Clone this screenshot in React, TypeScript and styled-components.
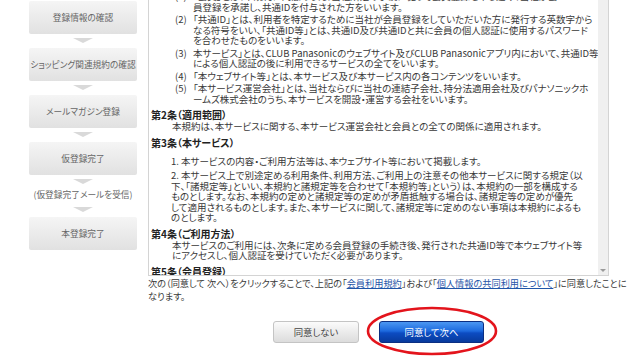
import React, { useLayoutEffect, useRef } from "react";
import styled, { createGlobalStyle } from "styled-components";

const GlobalStyle = createGlobalStyle`
  html, body { margin: 0; padding: 0; background: #ffffff; }
  body {
    font-family: "Noto Sans CJK JP", "Noto Sans", sans-serif;
    font-feature-settings: "palt";
    color: #333333;
    overflow: hidden;
  }
`;

const Page = styled.div`
  display: flex;
  align-items: flex-start;
  width: 640px;
  height: 360px;
  overflow: hidden;
`;

const Sidebar = styled.nav`
  flex: none;
  width: 148px;
  box-sizing: border-box;
  padding: 1px 0 0 29px;
`;

const StepList = styled.div`
  width: 108px;
  display: flex;
  flex-direction: column;
  align-items: center;
`;

const Step = styled.div`
  width: 100%;
  height: 33px;
  display: flex;
  align-items: center;
  justify-content: center;
  border-radius: 2px;
  background: linear-gradient(#f5f5f5, #e1e1e1);
  color: #666666;
  font-size: 8.7px;
  white-space: nowrap;
`;

const StepArrow = styled.div`
  width: 0;
  height: 0;
  margin: 4px 0 5px;
  border-left: 10px solid transparent;
  border-right: 10px solid transparent;
  border-top: 5px solid #d9d9d9;
`;

const StepNote = styled.div`
  font-size: 8.7px;
  line-height: 12px;
  color: #666666;
  margin-bottom: 2px;
  white-space: nowrap;
`;

const Main = styled.main`
  flex: none;
  width: 461px;
  display: flex;
  flex-direction: column;
`;

const TermsBox = styled.div`
  height: 276px;
  box-sizing: border-box;
  display: flex;
  border: 1px solid #d4d4d4;
  border-top: none;
`;

const TermsBody = styled.div`
  flex: 1;
  min-width: 0;
  overflow: hidden;
  padding: 2px 0 0 2px;
  font-size: 9.5px;
  line-height: 10.5px;
  white-space: nowrap;
  color: #383838;
`;

const ScrollTrack = styled.div`
  flex: none;
  width: 10px;
  background: #f0f0f0;
  display: flex;
  flex-direction: column;
  justify-content: flex-end;
  align-items: center;
`;

const ScrollDown = styled.div`
  width: 0;
  height: 0;
  margin-bottom: 3px;
  border-left: 3px solid transparent;
  border-right: 3px solid transparent;
  border-top: 3px solid #9a9a9a;
`;

const DefList = styled.ol`
  list-style: none;
  margin: 0;
  padding: 0 0 0 24px;
`;

const DefItem = styled.li`
  display: flex;
  margin-bottom: 2px;
`;

const DefNum = styled.span`
  flex: none;
  width: 18px;
`;

const Heading = styled.h3`
  margin: 5px 0 0;
  font-size: 10px;
  line-height: 12px;
  font-weight: bold;
  color: #222222;
`;

const Para = styled.p`
  margin: 0;
  padding-left: 21px;
`;

const NumList = styled.ol`
  margin: 7px 0 0;
  padding-left: 20px;
  list-style: decimal inside;
`;

const NumItem = styled.li`
  margin-bottom: 4px;
  &:last-child {
    margin-bottom: 0;
  }
`;

const Notice = styled.p`
  margin: 0;
  padding-top: 1px;
  font-size: 9.2px;
  line-height: 13px;
  color: #383838;
  white-space: nowrap;
`;

const TermsLink = styled.a`
  color: #1f55a8;
  text-decoration: underline;
`;

const ButtonRow = styled.div`
  position: relative;
  display: flex;
  justify-content: center;
  gap: 20px;
  margin-top: 18px;
`;

const Button = styled.button<{ $primary?: boolean }>`
  height: 22px;
  width: ${(p) => (p.$primary ? "105px" : "86px")};
  box-sizing: border-box;
  padding: 0;
  border-radius: 3px;
  font-family: inherit;
  font-feature-settings: "palt";
  font-size: 9.4px;
  cursor: pointer;
  color: ${(p) => (p.$primary ? "#ffffff" : "#444444")};
  border: 1px solid ${(p) => (p.$primary ? "#0b2f82" : "#c4c4c4")};
  background: ${(p) =>
    p.$primary
      ? "linear-gradient(#4b97f2 0%, #1d6ade 45%, #0c4cc2 55%, #083a9c 100%)"
      : "linear-gradient(#fbfbfb, #dcdcdc)"};
`;

const Highlight = styled.svg`
  position: absolute;
  left: 216px;
  top: -17px;
  pointer-events: none;
  overflow: visible;
`;

export default function App() {
  const bodyRef = useRef<HTMLDivElement>(null);
  useLayoutEffect(() => {
    if (bodyRef.current) bodyRef.current.scrollTop = 11;
  }, []);

  return (
    <>
      <GlobalStyle />
      <Page>
        <Sidebar>
          <StepList>
            <Step>登録情報の確認</Step>
            <StepArrow />
            <Step>ショッピング関連規約の確認</Step>
            <StepArrow />
            <Step>メールマガジン登録</Step>
            <StepArrow />
            <Step>仮登録完了</Step>
            <StepArrow />
            <StepNote>(仮登録完了メールを受信)</StepNote>
            <StepArrow />
            <Step>本登録完了</Step>
          </StepList>
        </Sidebar>
        <Main>
          <TermsBox>
            <TermsBody ref={bodyRef}>
              <DefList>
                <DefItem>
                  <DefNum>(1)</DefNum>
                  <span>
                    「会員」とは、本規約に同意のうえ、当社所定の手続に従って会員登録を申し込み、当社が会
                    <br />
                    員登録を承諾し、共通IDを付与された方をいいます。
                  </span>
                </DefItem>
                <DefItem>
                  <DefNum>(2)</DefNum>
                  <span>
                    「共通ID」とは、利用者を特定するために当社が会員登録をしていただいた方に発行する英数字から
                    <br />
                    なる符号をいい、「共通ID等」とは、共通ID及び共通IDと共に会員の個人認証に使用するパスワード
                    <br />
                    を合わせたものをいいます。
                  </span>
                </DefItem>
                <DefItem>
                  <DefNum>(3)</DefNum>
                  <span>
                    本サービス」とは、CLUB Panasonicのウェブサイト及びCLUB Panasonicアプリ内において、共通ID等
                    <br />
                    による個人認証の後に利用できるサービスの全てをいいます。
                  </span>
                </DefItem>
                <DefItem>
                  <DefNum>(4)</DefNum>
                  <span>「本ウェブサイト等」とは、本サービス及び本サービス内の各コンテンツをいいます。</span>
                </DefItem>
                <DefItem>
                  <DefNum>(5)</DefNum>
                  <span>
                    「本サービス運営会社」とは、当社ならびに当社の連結子会社、持分法適用会社及びパナソニックホ
                    <br />
                    ームズ株式会社のうち、本サービスを開設・運営する会社をいいます。
                  </span>
                </DefItem>
              </DefList>

              <Heading>第2条（適用範囲）</Heading>
              <Para>本規約は、本サービスに関する、本サービス運営会社と会員との全ての関係に適用されます。</Para>

              <Heading>第3条（本サービス）</Heading>
              <NumList>
                <NumItem>本サービスの内容・ご利用方法等は、本ウェブサイト等において掲載します。</NumItem>
                <NumItem>
                  本サービス上で別途定める利用条件、利用方法、ご利用上の注意その他本サービスに関する規定（以
                  <br />
                  下、「諸規定等」といい、本規約と諸規定等を合わせて「本規約等」という）は、本規約の一部を構成する
                  <br />
                  ものとします。なお、本規約の定めと諸規定等の定めが矛盾抵触する場合は、諸規定等の定めが優先
                  <br />
                  して適用されるものとします。また、本サービスに関して、諸規定等に定めのない事項は本規約によるも
                  <br />
                  のとします。
                </NumItem>
              </NumList>

              <Heading>第4条（ご利用方法）</Heading>
              <Para>
                本サービスのご利用には、次条に定める会員登録の手続き後、発行された共通ID等で本ウェブサイト等
                <br />
                にアクセスし、個人認証を受けていただく必要があります。
              </Para>

              <Heading>第5条（会員登録）</Heading>
              <Para>
                会員登録を希望する方は、本規約に同意のうえ、当社所定の方法により会員登録を申し込むものとします。
              </Para>
            </TermsBody>
            <ScrollTrack>
              <ScrollDown />
            </ScrollTrack>
          </TermsBox>

          <Notice>
            次の（同意して 次へ）をクリックすることで、上記の「<TermsLink href="#">会員利用規約</TermsLink>」および「
            <TermsLink href="#">個人情報の共同利用について</TermsLink>」に同意したことに
            <br />
            なります。
          </Notice>

          <ButtonRow>
            <Button type="button">同意しない</Button>
            <Button type="button" $primary>
              同意して次へ
            </Button>
            <Highlight width="136" height="54" viewBox="0 0 136 54">
              <ellipse cx="68" cy="27" rx="64" ry="23" fill="none" stroke="#e3141c" strokeWidth="2.6" />
            </Highlight>
          </ButtonRow>
        </Main>
      </Page>
    </>
  );
}
